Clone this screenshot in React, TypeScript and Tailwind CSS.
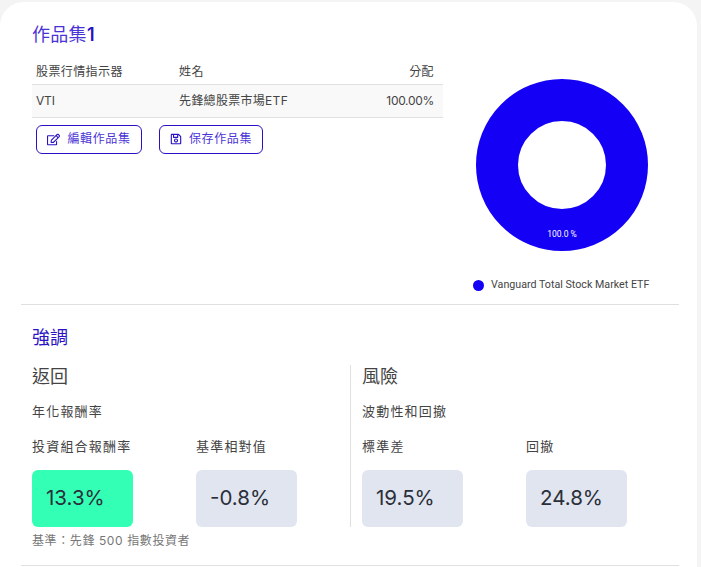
import React from "react";
import { FaRegEdit, FaRegSave } from "react-icons/fa";

const font = "font-['Inter','Noto_Sans_CJK_TC',sans-serif]";

function Metric({ label, value, hot }: { label: string; value: string; hot?: boolean }) {
  return (
    <div className="w-[101px]">
      <div className="h-[20px] text-[13px] leading-[20px] tracking-[1.2px] text-[#444]">{label}</div>
      <div
        className={`mt-[14px] flex h-[57px] items-center rounded-[6px] pl-[14px] text-[20.5px] text-[#2b2f3a] ${
          hot ? "bg-[#33ffb5]" : "bg-[#e1e5ef]"
        }`}
      >
        {value}
      </div>
    </div>
  );
}

function Donut() {
  return (
    <svg width="172" height="172" viewBox="0 0 172 172" className="block">
      <circle cx="86" cy="86" r="65" fill="none" stroke="#1400f5" strokeWidth="42" />
      <text x="86" y="158" textAnchor="middle" fontSize="8.5" fill="#fff" fontFamily="Roboto, sans-serif">
        100.0 %
      </text>
    </svg>
  );
}

export default function App() {
  return (
    <div className={`${font} h-[567px] w-[701px] overflow-hidden bg-[#f4f4f4] pt-[2px]`}>
      <div className="h-[600px] w-[697px] rounded-t-[24px] bg-white pl-[21px] pr-[18px]">
        {/* top section */}
        <div className="flex h-[303px] border-b border-[#e0e0e0]">
          <div className="w-[422px] pl-[11px] pt-[21px]">
            <h2 className="h-[24px] text-[18px] leading-[24px] tracking-[0.3px] text-[#4a33d6]">
              作品集<span className="font-semibold text-[#2a12c4]">1</span>
            </h2>
            <table className="mt-[14px] w-[411px] table-fixed text-[12px] text-[#444]">
              <thead>
                <tr className="h-[23px] border-b border-[#e0e0e0]">
                  <th className="w-[147px] pl-[4px] text-left font-normal tracking-[0.4px]">股票行情指示器</th>
                  <th className="w-[170px] text-left font-normal tracking-[0.4px]">姓名</th>
                  <th className="pr-[9px] text-right font-normal tracking-[0.4px]">分配</th>
                </tr>
              </thead>
              <tbody>
                <tr className="h-[33px] border-b border-[#e0e0e0] bg-[#f9f9f9]">
                  <td className="pl-[4px] tracking-[-0.2px]">VTI</td>
                  <td className="tracking-[0.3px]">先鋒總股票市場ETF</td>
                  <td className="pr-[9px] text-right tracking-[-0.3px]">100.00%</td>
                </tr>
              </tbody>
            </table>
            <div className="mt-[7px] flex gap-[17px] pl-[4px]">
              <button className="flex h-[29px] w-[106px] items-center justify-center gap-[7px] rounded-[6px] border border-[#2a12c4] text-[12px] tracking-[0.6px] text-[#4a33d6]">
                <FaRegEdit size={13} className="text-[#2a12c4]" />
                編輯作品集
              </button>
              <button className="flex h-[29px] w-[104px] items-center justify-center gap-[7px] rounded-[6px] border border-[#2a12c4] text-[12px] tracking-[0.6px] text-[#4a33d6]">
                <FaRegSave size={12} className="text-[#2a12c4]" />
                保存作品集
              </button>
            </div>
          </div>
          <div className="flex flex-1 flex-col pl-[33px] pt-[77px]">
            <Donut />
            <div className="mt-[26px] flex items-center gap-[7px] font-['Roboto',sans-serif] text-[10.7px] text-[#444]">
              <span className="-ml-[3px] h-[11px] w-[11px] rounded-full bg-[#1400f5]" />
              Vanguard Total Stock Market ETF
            </div>
          </div>
        </div>
        {/* highlights */}
        <div className="h-[261px] border-b border-[#e0e0e0] pl-[11px] pt-[21px]">
          <h2 className="h-[24px] text-[18px] leading-[24px] text-[#2a12c4]">強調</h2>
          <div className="mt-[15px] flex">
            <div className="w-[318px]">
              <h3 className="h-[24px] text-[18px] leading-[24px] text-[#444]">返回</h3>
              <div className="mt-[12px] h-[20px] text-[13px] leading-[20px] tracking-[1.2px] text-[#444]">年化報酬率</div>
              <div className="mt-[15px] flex gap-[63px]">
                <Metric label="投資組合報酬率" value="13.3%" hot />
                <Metric label="基準相對值" value="-0.8%" />
              </div>
            </div>
            <div className="flex-1 border-l border-[#e0e0e0] pl-[11px]">
              <h3 className="h-[24px] text-[18px] leading-[24px] text-[#444]">風險</h3>
              <div className="mt-[12px] h-[20px] text-[13px] leading-[20px] tracking-[1.2px] text-[#444]">波動性和回撤</div>
              <div className="mt-[15px] flex gap-[63px]">
                <Metric label="標準差" value="19.5%" />
                <Metric label="回撤" value="24.8%" />
              </div>
            </div>
          </div>
          <div className="mt-[6px] text-[12px] leading-[16px] tracking-[0.6px] text-[#777]">基準：先鋒 500 指數投資者</div>
        </div>
      </div>
    </div>
  );
}
